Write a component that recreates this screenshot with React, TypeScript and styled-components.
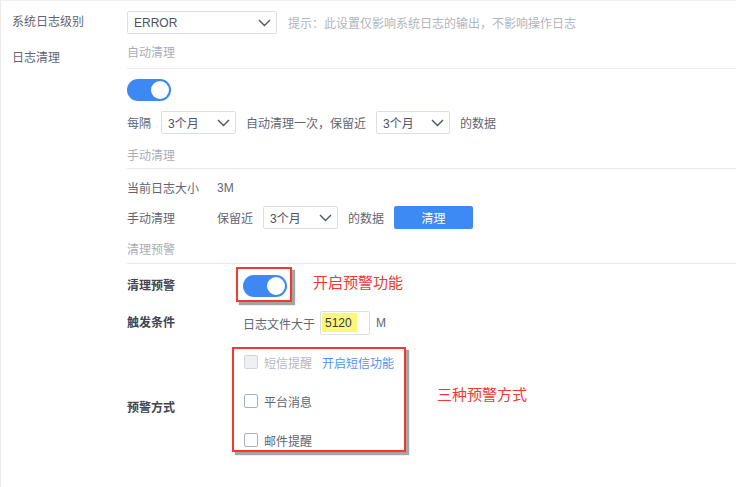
import React from "react";
import styled, { createGlobalStyle } from "styled-components";

const Global = createGlobalStyle`
  html, body { margin: 0; padding: 0; background: #fff; }
  body {
    font-family: "Liberation Sans", "Noto Sans CJK SC", sans-serif;
    font-size: 12px;
  }
  * { box-sizing: border-box; }
`;

const Page = styled.div`
  width: 736px;
  height: 487px;
  overflow: hidden;
  border-top: 1px solid #f1f1f1;
  border-left: 1px solid #ebebeb;
  color: #5f6672;
`;

const TopRow = styled.div`
  display: grid;
  grid-template-columns: 126px 1fr;
  align-items: center;
  margin-top: 10px;
  height: 23px;
`;

const MainRow = styled.div`
  display: grid;
  grid-template-columns: 126px 1fr;
  align-items: start;
`;

const SideLabel = styled.div<{ $mt?: number }>`
  padding-left: 11px;
  line-height: 17px;
  margin-top: ${(p) => p.$mt ?? 0}px;
  color: #5f6672;
`;

const Inline = styled.div`
  display: flex;
  align-items: center;
  gap: 11px;
`;

const Hint = styled.span`
  color: #b1b5bc;
`;

const Column = styled.div`
  display: flex;
  flex-direction: column;
`;

const SectionTitle = styled.div<{ $pt: number; $pb: number }>`
  padding: ${(p) => p.$pt}px 0 ${(p) => p.$pb}px;
  line-height: 17px;
  color: #a9aeb6;
  border-bottom: 1px solid #e7e9ec;
`;

const Line = styled.div<{ $mt: number; $gap?: number }>`
  display: flex;
  align-items: center;
  min-height: 23px;
  gap: ${(p) => p.$gap ?? 10}px;
  margin-top: ${(p) => p.$mt}px;
`;

const Key = styled.span`
  width: 80px;
  flex: none;
`;

const Text = styled.span`
  white-space: nowrap;
`;

const SelectBox = styled.div<{ $w: number }>`
  width: ${(p) => p.$w}px;
  height: 23px;
  border: 1px solid #dcdfe5;
  border-radius: 2px;
  padding: 0 5px 0 6px;
  display: flex;
  align-items: center;
  justify-content: space-between;
  color: #4d5462;
  background: #fff;
  flex: none;
`;

const Chevron = () => (
  <svg width="13" height="8" viewBox="0 0 13 8">
    <polyline points="1,1 6.5,6.5 12,1" fill="none" stroke="#4d5462" strokeWidth="1.4" />
  </svg>
);

const Select = ({ value, w }: { value: string; w: number }) => (
  <SelectBox $w={w}>
    <span>{value}</span>
    <Chevron />
  </SelectBox>
);

const Toggle = styled.div<{ $mt?: number }>`
  width: 44px;
  height: 22px;
  border-radius: 11px;
  background: #3d88f2;
  position: relative;
  margin-top: ${(p) => p.$mt ?? 0}px;
  flex: none;
  &::after {
    content: "";
    position: absolute;
    top: 2px;
    right: 2px;
    width: 18px;
    height: 18px;
    border-radius: 50%;
    background: #fff;
  }
`;

const Button = styled.button`
  width: 79px;
  height: 23px;
  border: none;
  border-radius: 2px;
  background: #3e8af4;
  color: #fff;
  font: inherit;
  padding: 0;
`;

const AlarmRow = styled.div<{ $mt: number; $align?: string }>`
  display: grid;
  grid-template-columns: 116px auto;
  align-items: ${(p) => p.$align ?? "center"};
  margin-top: ${(p) => p.$mt}px;
`;

const BoldLabel = styled.div<{ $mt?: number }>`
  font-weight: 700;
  color: #3f4553;
  line-height: 17px;
  margin-top: ${(p) => p.$mt ?? 0}px;
`;

const Cell = styled.div<{ $align?: string }>`
  display: flex;
  align-items: ${(p) => p.$align ?? "flex-start"};
`;

const Framed = styled.div`
  position: relative;
  display: flex;
`;

const RedFrame = styled.div<{ $t: number; $l: number; $w: number; $h: number }>`
  position: absolute;
  top: ${(p) => p.$t}px;
  left: ${(p) => p.$l}px;
  width: ${(p) => p.$w}px;
  height: ${(p) => p.$h}px;
  border: 2px solid #f2382f;
  box-shadow: 3px 3px 1px rgba(90, 90, 90, 0.55);
  pointer-events: none;
`;

const Note = styled.span<{ $ml: number; $mt?: number }>`
  color: #f2382f;
  font-size: 15px;
  line-height: 20px;
  margin-left: ${(p) => p.$ml}px;
  margin-top: ${(p) => p.$mt ?? 0}px;
  white-space: nowrap;
`;

const InputBox = styled.div`
  width: 50px;
  height: 24px;
  border: 1px solid #dcdfe5;
  border-radius: 2px;
  display: flex;
  align-items: stretch;
  padding: 1px 0 2px 1px;
  margin-left: 5px;
`;

const Highlight = styled.span`
  background: #fbf877;
  width: 35px;
  padding-left: 3px;
  color: #333a46;
  display: flex;
  align-items: center;
`;

const Unit = styled.span`
  margin-left: 6px;
`;

const List = styled.div`
  display: flex;
  flex-direction: column;
  gap: 19px;
  width: 151px;
`;

const Item = styled.div<{ $disabled?: boolean }>`
  display: flex;
  align-items: center;
  height: 20px;
  padding-left: 1px;
  color: ${(p) => (p.$disabled ? "#b4b8bf" : "#5f6672")};
  white-space: nowrap;
`;

const Box = styled.span<{ $disabled?: boolean }>`
  width: 14px;
  height: 14px;
  border-radius: 2px;
  border: 1px solid ${(p) => (p.$disabled ? "#d3d7dd" : "#aab0ba")};
  background: ${(p) => (p.$disabled ? "#eef0f3" : "#fff")};
  margin-right: 6px;
  flex: none;
`;

const Link = styled.span`
  color: #4f95f3;
  margin-left: 10px;
`;

export default function App() {
  return (
    <>
      <Global />
      <Page>
        <TopRow>
          <SideLabel>系统日志级别</SideLabel>
          <Inline>
            <Select value="ERROR" w={150} />
            <Hint>提示：此设置仅影响系统日志的输出，不影响操作日志</Hint>
          </Inline>
        </TopRow>
        <MainRow>
          <SideLabel $mt={16}>日志清理</SideLabel>
          <Column>
            <SectionTitle $pt={11} $pb={6}>自动清理</SectionTitle>
            <Toggle $mt={10} />
            <Line $mt={10}>
              <Text>每隔</Text>
              <Select value="3个月" w={75} />
              <Text>自动清理一次，保留近</Text>
              <Select value="3个月" w={74} />
              <Text>的数据</Text>
            </Line>
            <SectionTitle $pt={14} $pb={3}>手动清理</SectionTitle>
            <Line $mt={7}>
              <Key>当前日志大小</Key>
              <Text>3M</Text>
            </Line>
            <Line $mt={7}>
              <Key>手动清理</Key>
              <Text>保留近</Text>
              <Select value="3个月" w={75} />
              <Text>的数据</Text>
              <Button>清理</Button>
            </Line>
            <SectionTitle $pt={13} $pb={4}>清理预警</SectionTitle>
            <AlarmRow $mt={11}>
              <BoldLabel>清理预警</BoldLabel>
              <Cell>
                <Framed>
                  <Toggle />
                  <RedFrame $t={-8} $l={-7} $w={56} $h={35} />
                </Framed>
                <Note $ml={26} $mt={-2}>开启预警功能</Note>
              </Cell>
            </AlarmRow>
            <AlarmRow $mt={14}>
              <BoldLabel>触发条件</BoldLabel>
              <Cell $align="center">
                <Text>日志文件大于</Text>
                <InputBox>
                  <Highlight>5120</Highlight>
                </InputBox>
                <Unit>M</Unit>
              </Cell>
            </AlarmRow>
            <AlarmRow $mt={17} $align="start">
              <BoldLabel $mt={48}>预警方式</BoldLabel>
              <Cell>
                <Framed>
                  <List>
                    <Item $disabled>
                      <Box $disabled />
                      短信提醒
                      <Link>开启短信功能</Link>
                    </Item>
                    <Item>
                      <Box />
                      平台消息
                    </Item>
                    <Item>
                      <Box />
                      邮件提醒
                    </Item>
                  </List>
                  <RedFrame $t={-5} $l={-11} $w={174} $h={105} />
                </Framed>
                <Note $ml={43} $mt={33}>三种预警方式</Note>
              </Cell>
            </AlarmRow>
          </Column>
        </MainRow>
      </Page>
    </>
  );
}
